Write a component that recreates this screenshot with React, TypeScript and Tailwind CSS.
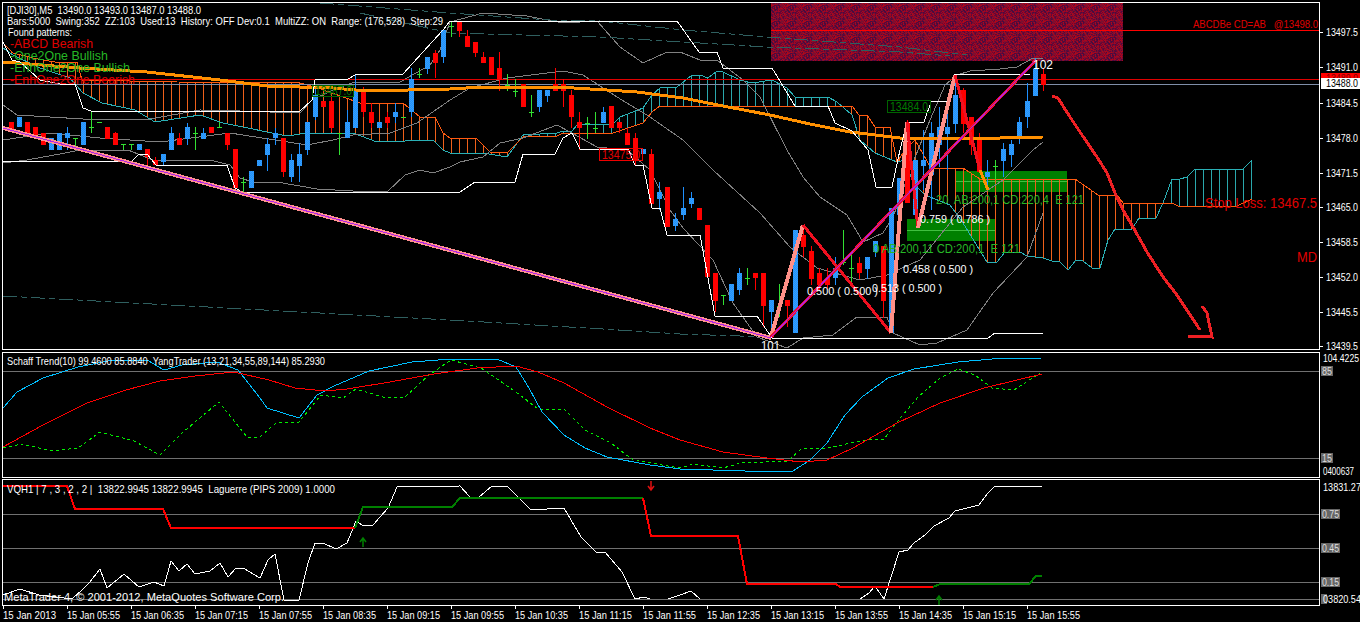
import React from "react";

type P = [number, number];
type C = [number, "b" | "r" | "g", number, number, number, number];

const pts = (a: P[]) => a.map((p) => p.join(",")).join(" ");
const interp = (a: P[], x: number) => {
  if (x <= a[0][0]) return a[0][1];
  for (let i = 1; i < a.length; i++) {
    if (x <= a[i][0]) {
      const [x0, y0] = a[i - 1];
      const [x1, y1] = a[i];
      return y0 + ((y1 - y0) * (x - x0)) / (x1 - x0);
    }
  }
  return a[a.length - 1][1];
};

const candles: C[] = [
  [0,"r",122,132,122,132],[1,"b",117,127,117,127],[2,"r",122,135,122,135],[3,"r",127,137,127,137],[4,"r",133,145,133,145],
  [5,"b",138,150,138,150],[6,"b",133,150,133,150],[7,"b",127,150,133,138],[8,"g",138,148,138,138],[9,"b",122,145,122,145],
  [10,"g",112,133,127,127],[11,"g",122,122,122,122],[12,"r",127,139,127,139],[13,"r",132,145,133,145],[14,"g",144,150,144,144],
  [15,"g",144,150,144,144],[16,"b",144,150,144,150],[17,"r",149,165,149,157],[18,"r",157,165,160,165],[19,"b",154,165,154,162],
  [20,"b",127,150,133,150],[21,"r",133,145,138,145],[22,"b",123,145,127,139],[23,"g",127,150,133,133],[24,"b",128,139,133,139],
  [25,"r",127,133,127,133],[26,"g",122,128,127,127],[27,"r",133,150,133,145],[28,"r",149,188,149,188],[29,"g",177,193,182,182],
  [30,"b",171,188,171,188],[31,"b",160,166,160,166],[32,"b",138,171,144,155],[33,"b",128,145,133,138],[34,"r",138,177,138,172],
  [35,"b",154,182,160,177],[36,"b",143,182,154,166],[37,"b",122,155,122,150],[38,"b",88,120,95,117],[39,"r",101,107,101,107],
  [40,"r",97,132,101,128],[41,"g",133,155,133,133],[42,"b",110,138,122,138],[43,"b",75,128,90,128],[44,"r",87,117,90,112],
  [45,"r",103,128,112,123],[46,"b",122,128,122,128],[47,"r",112,128,117,123],[48,"b",103,123,112,117],[49,"g",117,117,117,117],
  [50,"b",68,117,79,112],[51,"g",68,78,74,74],[52,"b",57,74,57,69],[53,"r",50,78,53,63],[54,"b",30,63,30,57],
  [55,"g",22,37,26,26],[56,"r",22,37,22,31],[57,"r",30,47,36,47],[58,"r",42,57,42,53],[59,"r",52,63,57,63],
  [60,"r",57,75,57,75],[61,"r",52,91,68,80],[62,"g",74,91,85,85],[63,"g",79,97,91,91],[64,"r",84,107,84,107],
  [65,"g",95,117,112,112],[66,"b",90,112,90,107],[67,"b",90,102,90,96],[68,"r",68,91,84,91],[69,"r",79,107,84,91],
  [70,"r",90,128,95,117],[71,"r",112,150,122,128],[72,"g",117,139,123,123],[73,"g",112,133,128,128],[74,"b",107,123,112,123],
  [75,"r",106,128,106,128],[76,"r",122,133,122,128],[77,"r",128,145,133,145],[78,"r",133,166,138,161],[79,"b",149,154,149,154],
  [80,"r",149,204,154,204],[81,"b",182,210,192,199],[82,"r",187,227,187,227],[83,"b",213,231,219,226],[84,"b",187,220,208,215],
  [85,"b",192,208,198,204],[86,"r",208,220,208,220],[87,"r",225,277,225,277],[88,"r",273,312,273,301],[89,"g",295,305,295,295],
  [90,"b",284,301,284,301],[91,"b",268,295,273,290],[92,"g",268,285,278,278],[93,"r",273,290,273,278],[94,"r",273,327,273,306],
  [95,"b",300,337,300,312],[96,"g",284,317,306,306],[97,"r",300,327,300,306],[98,"b",230,333,230,333],[99,"r",225,257,235,247],
  [100,"r",246,285,251,279],[101,"r",268,290,273,285],[102,"r",268,290,278,285],[103,"b",257,285,268,278],[104,"g",230,265,262,262],
  [105,"g",251,285,268,268],[106,"r",257,279,263,273],[107,"b",257,279,257,269],[108,"b",241,257,241,252],[109,"r",246,318,246,301],
  [110,"b",208,333,208,333],[111,"b",178,215,178,215],[112,"r",120,203,123,203],[113,"b",160,215,160,215],[114,"b",130,190,160,166],
  [115,"b",122,210,133,175],[116,"b",107,167,127,145],[117,"b",100,170,127,134],[118,"b",75,133,95,124],[119,"r",88,133,90,124],
  [120,"r",117,155,117,145],[121,"r",133,172,139,172],[122,"b",160,187,172,177],[123,"g",160,180,166,166],[124,"b",143,177,149,161],
  [125,"b",140,167,144,155],[126,"b",117,144,122,138],[127,"b",83,128,101,117],[128,"b",58,96,69,96],[129,"r",68,91,74,85],
];

const teal: P[] = [[3,48],[13,55],[40,68],[70,78],[83,93],[102,103],[135,110],[155,122],[200,115],[223,123],[287,136],[307,133],[333,133],[353,133],[377,142],[433,140],[443,150],[450,153],[483,153],[507,157],[523,135],[557,133],[563,131],[572,131],[578,124],[613,124],[620,117],[643,108],[652,95],[660,88],[677,87],[692,75],[700,75],[708,78],[717,71],[723,72],[740,80],[752,83],[772,80],[787,88],[795,97],[828,97],[837,102],[852,115],[860,140],[875,153],[887,158],[897,162],[905,160],[913,183],[925,195],[950,205],[963,223],[987,262],[997,262],[1005,252],[1020,252],[1027,256],[1043,258],[1052,261],[1059,261],[1068,270],[1076,260],[1083,261],[1092,268],[1100,268],[1108,240],[1115,229],[1132,229],[1139,218],[1156,218],[1163,203],[1172,179],[1180,179],[1187,177],[1195,169],[1243,169],[1252,160]];
const orange: P[] = [[3,43],[13,53],[33,58],[60,63],[77,62],[82,80],[177,82],[300,83],[315,87],[360,103],[403,103],[420,117],[435,117],[443,133],[450,138],[476,138],[490,152],[508,152],[523,137],[557,136],[563,133],[570,133],[613,133],[643,123],[652,112],[660,106],[852,106],[859,115],[867,115],[875,127],[890,127],[897,162],[905,150],[915,140],[931,168],[963,168],[980,179],[1075,179],[1098,195],[1117,195],[1123,203],[1163,203],[1172,203],[1178,206],[1237,206],[1252,199]];
const ma: P[] = [[3,62],[80,68],[147,72],[220,80],[267,86],[333,88],[367,91],[450,89],[483,87],[557,87],[607,90],[637,92],[683,98],[723,106],[770,115],[810,124],[850,132],[900,138],[1000,138],[1043,137]];
const whiteUp: P[] = [[3,42],[12,60],[20,62],[40,80],[60,84],[75,84],[83,108],[91,111],[300,111],[312,100],[315,80],[348,79],[357,74],[403,74],[443,30],[450,21],[677,21],[699,52],[717,52],[723,68],[772,68],[795,106],[828,106],[835,123],[852,131],[868,150],[876,187],[892,187],[900,150],[907,122],[924,122],[931,102],[947,101],[955,74],[1030,74]];
const whiteLow: P[] = [[3,161],[132,161],[138,155],[147,154],[156,165],[227,165],[235,188],[242,192],[460,192],[475,182],[515,182],[523,154],[555,154],[563,138],[572,133],[580,149],[628,149],[635,165],[643,165],[652,208],[660,208],[667,235],[700,235],[715,316],[757,316],[772,338],[988,338],[995,333],[1043,333]];
const bbUp: P[] = [[3,105],[17,115],[83,119],[150,119],[200,110],[240,111],[300,113],[312,100],[333,90],[355,82],[400,82],[430,65],[440,50],[450,22],[483,13],[527,16],[563,23],[597,21],[620,47],[643,63],[667,52],[680,52],[700,60],[717,60],[743,80],[760,97],[787,150],[803,177],[820,197],[847,215],[863,242],[883,233],[893,217],[910,170],[930,120],[945,85],[957,75],[970,71],[1000,69],[1017,67],[1033,58],[1043,58]];
const bbMid: P[] = [[3,140],[50,133],[100,138],[160,142],[230,133],[307,145],[333,140],[353,135],[390,133],[417,123],[450,100],[470,88],[507,78],[563,71],[583,75],[617,97],[650,117],[683,140],[713,170],[760,213],[790,247],[817,268],[860,280],[887,275],[920,260],[963,207],[1003,180],[1033,150],[1043,142]];
const bbLow: P[] = [[3,163],[27,160],[60,154],[80,150],[128,150],[153,160],[210,160],[230,165],[240,178],[253,182],[277,182],[317,189],[353,191],[387,192],[405,175],[420,170],[433,173],[450,167],[460,162],[483,157],[500,143],[523,138],[557,125],[570,132],[597,147],[627,150],[650,170],[670,210],[683,228],[713,260],[733,303],[757,337],[787,348],[803,338],[833,335],[857,317],[887,317],[893,333],[920,345],[937,343],[967,330],[993,293],[1027,257],[1043,213]];
const dash1: P[] = [[320,3],[450,13],[550,20],[600,21],[683,30],[767,37],[900,47],[967,55]];
const dash2: P[] = [[360,13],[450,33],[600,37],[767,47],[900,52],[950,56]];
const dash3: P[] = [[3,296],[450,320],[603,329],[680,334],[770,337]];

const sBlue: P[] = [[3,408],[17,392],[43,378],[78,367],[113,360],[147,360],[164,370],[182,365],[217,362],[238,370],[260,398],[267,408],[299,418],[317,395],[334,386],[369,371],[412,362],[451,359],[497,359],[516,367],[529,388],[542,412],[564,435],[585,448],[607,457],[650,465],[680,469],[745,471],[793,471],[810,460],[827,443],[845,415],[862,397],[888,378],[914,369],[958,362],[992,359],[1042,358]];
const sRed: P[] = [[3,447],[43,425],[87,403],[126,390],[160,381],[195,376],[234,372],[269,380],[295,388],[325,391],[347,389],[390,382],[434,374],[477,368],[516,366],[538,372],[564,383],[607,407],[650,428],[680,440],[723,452],[767,458],[801,462],[827,460],[853,448],[897,423],[940,403],[984,388],[1042,374]];
const sGreen: P[] = [[3,448],[22,444],[52,451],[78,448],[100,432],[134,441],[160,455],[182,433],[219,402],[247,437],[260,437],[277,422],[299,422],[321,395],[343,398],[356,389],[386,398],[405,397],[429,375],[451,360],[481,368],[516,392],[538,409],[564,409],[585,430],[611,443],[633,460],[680,468],[693,464],[723,468],[741,463],[788,461],[801,449],[827,448],[866,440],[884,439],[897,422],[918,397],[940,378],[958,369],[975,375],[992,388],[1014,390],[1040,373]];

const vW1: P[] = [[3,595],[20,589],[39,595],[72,599],[82,590],[89,583],[100,569],[107,588],[124,574],[139,587],[154,582],[164,586],[171,561],[179,571],[187,564],[195,574],[210,571],[220,563],[228,577],[236,568],[243,568],[260,578],[268,560],[275,554],[284,600],[299,600],[308,563],[315,543],[323,543],[336,549],[347,543],[356,521],[362,525],[373,525],[388,508],[397,487],[460,486],[470,497],[479,497],[492,486],[507,486],[531,510],[564,508],[581,537],[596,552],[605,552],[622,572],[635,599],[644,597],[650,599]];
const vW2: P[] = [[668,599],[680,595],[691,591],[700,599]];
const vW3: P[] = [[860,599],[869,593],[875,586],[884,599],[899,552],[908,550],[914,543],[925,535],[934,526],[949,518],[955,511],[979,505],[988,493],[995,486],[1042,486]];

const noiseColors = ["#a80420", "#5a0a3c", "#860c2c", "#6c0634", "#b00818", "#480c40", "#900a28", "#7a1030"];
const noise = Array.from({ length: 256 }, (_, i) => {
  const h = Math.sin(i * 12.9898 + 4.1) * 43758.5453;
  return noiseColors[Math.floor((h - Math.floor(h)) * 8)];
});

const Line = ({ p, c, w = 1, dash }: { p: P[]; c: string; w?: number; dash?: string }) => (
  <polyline points={pts(p)} fill="none" stroke={c} strokeWidth={w} strokeDasharray={dash} shapeRendering="crispEdges" />
);

const T = ({ x, y, w, s = 11, c = "#fff", children }: { x: number; y: number; w?: number; s?: number; c?: string; children: React.ReactNode }) => (
  <text x={x} y={y} fontSize={s} fill={c} textLength={w} lengthAdjust={w ? "spacingAndGlyphs" : undefined} xmlSpace="preserve">
    {children}
  </text>
);

const mainAxis: [string, number][] = [["13497.5",32],["13491.0",67],["13484.5",103],["13478.0",138],["13471.5",173],["13465.0",207],["13458.5",242],["13452.0",277],["13445.5",312],["13439.5",346]];
const times = ["2013","05:55","06:35","07:15","07:55","08:35","09:15","09:55","10:35","11:15","11:55","12:35","13:15","13:55","14:35","15:15","15:55"];

const Cloud = () => (
  <g>
    {Array.from({ length: 156 }, (_, i) => {
      const x = 11 + 8 * i;
      const a = interp(teal, x);
      const b = interp(orange, x);
      return <rect key={x} x={x} width={1} y={Math.min(a, b)} height={Math.abs(a - b)} fill={a < b ? "#2aa8ad" : "#f0601a"} />;
    })}
    <Line p={teal} c="#2ab0b5" />
    <Line p={orange} c="#ff5a10" />
  </g>
);

const Candle = ({ k }: { k: C }) => {
  const x = 11 + 8 * k[0];
  const col = k[1] === "b" ? "#1e90ff" : k[1] === "r" ? "#ff0000" : "#32e032";
  if (k[1] === "g")
    return (
      <g fill={col}>
        <rect x={x} y={k[2]} width={1} height={Math.max(k[3] - k[2], 1)} />
        <rect x={x - 2} y={k[4]} width={5} height={1} />
      </g>
    );
  return (
    <g fill={col}>
      <rect x={x} y={k[2]} width={1} height={k[3] - k[2]} />
      <rect x={x - 2} y={k[4]} width={5} height={k[5] - k[4]} fill={k[1] === "b" ? "url(#blueDots)" : col} />
    </g>
  );
};

const Thick = ({ a, b, c, w }: { a: P; b: P; c: string; w: number }) => (
  <line x1={a[0]} y1={a[1]} x2={b[0]} y2={b[1]} stroke={c} strokeWidth={w} shapeRendering="crispEdges" />
);

const arrowPath: P[] = [[1052,96],[1058,98],[1070,117],[1080,132],[1097,157],[1107,173],[1115,193],[1123,210],[1133,227],[1147,252],[1163,277],[1177,295],[1200,330]];
const arrowHead: P[] = [[1202,306],[1207,313],[1212,337],[1188,336]];

const MainChart = () => (
  <svg className="block h-full w-full" viewBox="3 3 1316 346">
    <defs>
      <pattern id="rust" width="16" height="16" patternUnits="userSpaceOnUse">
        {noise.map((c, i) => (
          <rect key={i} x={i % 16} y={Math.floor(i / 16)} width={1} height={1} fill={c} />
        ))}
      </pattern>
      <pattern id="blueDots" width="2" height="2" patternUnits="userSpaceOnUse">
        <rect width="2" height="2" fill="#1e90ff" />
        <rect width="1" height="1" fill="#3aa0f8" />
        <rect x="1" y="1" width="1" height="1" fill="#3aa0f8" />
      </pattern>
    </defs>

    <rect x={771} y={3} width={352} height={58} fill="url(#rust)" />
    <rect x={955} y={171} width={112} height={21} fill="#008000" />
    <rect x={907} y={219} width={88} height={22} fill="#008000" />
    <rect x={955} y={181} width={112} height={1} fill="#40c040" />
    <rect x={907} y={230} width={88} height={1} fill="#40c040" />

    <Cloud />
    <Line p={bbUp} c="#808080" />
    <Line p={bbMid} c="#808080" />
    <Line p={bbLow} c="#808080" />
    <Line p={dash1} c="#2f5f5f" dash="14 4 6 4" />
    <Line p={dash2} c="#2f5f5f" dash="14 4 6 4" />
    <Line p={dash3} c="#2f5f5f" dash="14 4 6 4" />

    <rect x={3} y={79} width={1316} height={1} fill="#e00000" />
    <rect x={3} y={84} width={1316} height={1} fill="#7f8ea8" />
    <rect x={771} y={30} width={548} height={1} fill="#ff0000" />

    {candles.map((k) => (
      <Candle key={k[0]} k={k} />
    ))}

    <Line p={ma} c="#ff9000" w={3} />
    <Line p={whiteUp} c="#ffffff" />
    <Line p={whiteLow} c="#ffffff" />

    <Thick a={[3, 128]} b={[771, 338]} c="#ff9090" w={4} />
    <Thick a={[3, 128]} b={[771, 338]} c="#b020e8" w={1} />

    <Thick a={[771, 337]} b={[803, 225]} c="#ff9088" w={4} />
    <Thick a={[803, 225]} b={[891, 333]} c="#f01020" w={3} />
    <Thick a={[891, 333]} b={[907, 122]} c="#ff9088" w={4} />
    <Thick a={[907, 122]} b={[918, 228]} c="#f01020" w={3} />
    <Thick a={[918, 228]} b={[955, 75]} c="#ff9088" w={4} />
    <Thick a={[955, 75]} b={[980, 170]} c="#f01020" w={3} />
    <Thick a={[980, 170]} b={[988, 190]} c="#ff9000" w={3} />
    <Thick a={[771, 337]} b={[1036, 60]} c="#f01030" w={3} />
    <Thick a={[771, 337]} b={[1036, 60]} c="#b020e8" w={1} />

    <Line p={arrowPath} c="#ee2024" w={3} />
    <Line p={arrowHead} c="#ee2024" w={3} />

    <T x={7} y={14} w={194}>[DJI30],M5  13490.0 13493.0 13487.0 13488.0</T>
    <T x={7} y={25} w={436}>Bars:5000  Swing:352  ZZ:103  Used:13  History: OFF Dev:0.1  MultiZZ: ON  Range: (176,528)  Step:29</T>
    <T x={8} y={36} w={64}>Found patterns:</T>
    <T x={10} y={48} w={83} s={13} c="#e00000">-ABCD Bearish</T>
    <T x={10} y={60} w={98} s={13} c="#26b826">-One2One Bullish</T>
    <T x={10} y={72} w={120} s={13} c="#26b826">-EnhOne2One Bullish</T>
    <T x={10} y={84} w={125} s={13} c="#e00000">-EnhOne2One Bearish</T>

    <rect x={312.5} y={85.5} width={41} height={11} fill="none" stroke="#006400" />
    <T x={315} y={95} w={37} s={12} c="#007a00">13487.0</T>
    <rect x={887.5} y={100.5} width={43} height={12} fill="none" stroke="#006400" />
    <T x={890} y={111} w={38} s={12} c="#007a00">13484.0</T>
    <rect x={599.5} y={148.5} width={43} height={12} fill="none" stroke="#ee0000" />
    <T x={602} y={159} w={38} s={12} c="#e00000">13475.0</T>

    <T x={1033} y={69} w={20} s={13}>102</T>
    <T x={761} y={350} w={19} s={13}>101</T>

    <T x={936} y={204} w={148} s={12} c="#26b826">20  AB:200,1 CD:220,4  E 121</T>
    <T x={873} y={253} w={147} s={12} c="#26b826">0 AB:200,11 CD:200,1  E 121</T>
    <T x={920} y={223} w={70} s={11}>0.759 ( 0.786 )</T>
    <T x={903} y={273} w={70} s={11}>0.458 ( 0.500 )</T>
    <T x={872} y={292} w={70} s={11}>0.513 ( 0.500 )</T>
    <T x={807} y={295} w={71} s={11}>0.500 ( 0.500 )</T>

    <T x={1193} y={28} w={125} s={11} c="#e00000">ABCDBe CD=AB   @13498.0</T>
    <T x={1205} y={208} w={112} s={14} c="#e00000">Stop Loss: 13467.5</T>
    <T x={1297} y={262} w={20} s={14} c="#e00000">MD</T>
  </svg>
);

const AxisMain = () => (
  <svg className="block h-full w-full" viewBox="1320 2 40 348">
    {mainAxis.map(([t, y]) => (
      <g key={t}>
        <rect x={1320} y={y} width={3} height={1} fill="#fff" />
        <T x={1326} y={y + 4} w={32}>{t}</T>
      </g>
    ))}
    <rect x={1321} y={73} width={39} height={5} fill="#ff0000" />
    <T x={1326} y={82} w={32} c="#800000">13489.0</T>
    <rect x={1321} y={78} width={39} height={11} fill="#fff" />
    <T x={1326} y={87} w={32} c="#000">13488.0</T>
  </svg>
);

const Schaff = () => (
  <svg className="block h-full w-full" viewBox="3 353 1316 124">
    <rect x={3} y={371} width={1316} height={1} fill="#707070" />
    <rect x={3} y={458} width={1316} height={1} fill="#707070" />
    <Line p={sGreen} c="#00f000" dash="3 3" />
    <Line p={sBlue} c="#00bfff" />
    <Line p={sRed} c="#ff0000" />
    <T x={7} y={365} w={318}>Schaff Trend(10) 99.4600 85.8840  YangTrader (13,21,34,55,89,144) 85.2930</T>
  </svg>
);

const AxisSchaff = () => (
  <svg className="block h-full w-full" viewBox="1320 352 40 126">
    <T x={1323} y={362} w={36}>104.4225</T>
    <rect x={1321} y={366} width={12} height={10} fill="#666" />
    <T x={1322} y={375} w={10} c="#ddd">85</T>
    <rect x={1321} y={453} width={12} height={10} fill="#666" />
    <T x={1322} y={462} w={10} c="#ddd">15</T>
    <T x={1323} y={475} w={31}>0400637</T>
  </svg>
);

const Vqh = () => (
  <svg className="block h-full w-full" viewBox="3 480 1316 125">
    {[514, 548, 582, 599].map((y) => (
      <rect key={y} x={3} y={y} width={1316} height={1} fill="#707070" />
    ))}
    <Line p={vW1} c="#ffffff" />
    <Line p={vW2} c="#ffffff" />
    <Line p={vW3} c="#ffffff" />
    <Line p={[[3,486],[67,486],[75,509],[163,509],[171,528],[355,528]]} c="#ff0000" w={2} />
    <Line p={[[355,528],[363,507],[452,507],[460,498],[643,498]]} c="#008000" w={2} />
    <Line p={[[643,498],[651,536],[738,536],[747,584],[836,584],[840,587],[933,587]]} c="#ff0000" w={2} />
    <Line p={[[933,587],[940,584],[1029,584],[1036,576],[1042,576]]} c="#008000" w={2} />

    <path d="M651 481V490M648 486L651 490L654 486" fill="none" stroke="#e01010" strokeWidth={1.5} />
    <path d="M363 547V538M360 542L363 538L366 542" fill="none" stroke="#008000" strokeWidth={1.5} />
    <path d="M939 605V596M936 600L939 596L942 600" fill="none" stroke="#008000" strokeWidth={1.5} />

    <T x={7} y={493} w={328}>VQH1 | 7 , 3 , 2 , 2 |  13822.9945 13822.9945  Laguerre (PIPS 2009) 1.0000</T>
    <T x={4} y={601} w={280}>MetaTrader 4, © 2001-2012, MetaQuotes Software Corp.</T>
  </svg>
);

const AxisVqh = () => (
  <svg className="block h-full w-full" viewBox="1320 479 40 127">
    <T x={1323} y={491} w={38}>13831.27</T>
    {([["0.75", 514], ["0.45", 548], ["0.15", 582]] as [string, number][]).map(([t, y]) => (
      <g key={t}>
        <rect x={1321} y={y - 5} width={19} height={10} fill="#666" />
        <T x={1322} y={y + 4} w={17} c="#ddd">{t}</T>
      </g>
    ))}
    <rect x={1321} y={594} width={6} height={10} fill="#666" />
    <T x={1323} y={603} w={38}>03820.54</T>
  </svg>
);

const TimeAxis = () => (
  <svg className="block h-full w-full" viewBox="0 606 1360 16">
    {times.map((t, i) => {
      const x = 3 + 64 * i;
      return (
        <g key={t}>
          <rect x={x} y={606} width={1} height={3} fill="#fff" />
          <T x={x} y={619} w={53}>{i === 0 ? "15 Jan 2013" : `15 Jan ${t}`}</T>
        </g>
      );
    })}
  </svg>
);

export default function App() {
  return (
    <div className="flex h-[622px] w-[1360px] flex-col overflow-hidden bg-black pt-[2px] font-['Liberation_Sans',sans-serif]">
      <div className="flex h-[348px] pl-[2px]">
        <div className="h-full w-[1318px] border border-white">
          <MainChart />
        </div>
        <div className="flex-1">
          <AxisMain />
        </div>
      </div>
      <div className="mt-[2px] flex h-[126px] pl-[2px]">
        <div className="h-full w-[1318px] border border-white">
          <Schaff />
        </div>
        <div className="flex-1">
          <AxisSchaff />
        </div>
      </div>
      <div className="mt-[1px] flex h-[127px] pl-[2px]">
        <div className="h-full w-[1318px] border border-white">
          <Vqh />
        </div>
        <div className="flex-1">
          <AxisVqh />
        </div>
      </div>
      <div className="h-[16px]">
        <TimeAxis />
      </div>
    </div>
  );
}
